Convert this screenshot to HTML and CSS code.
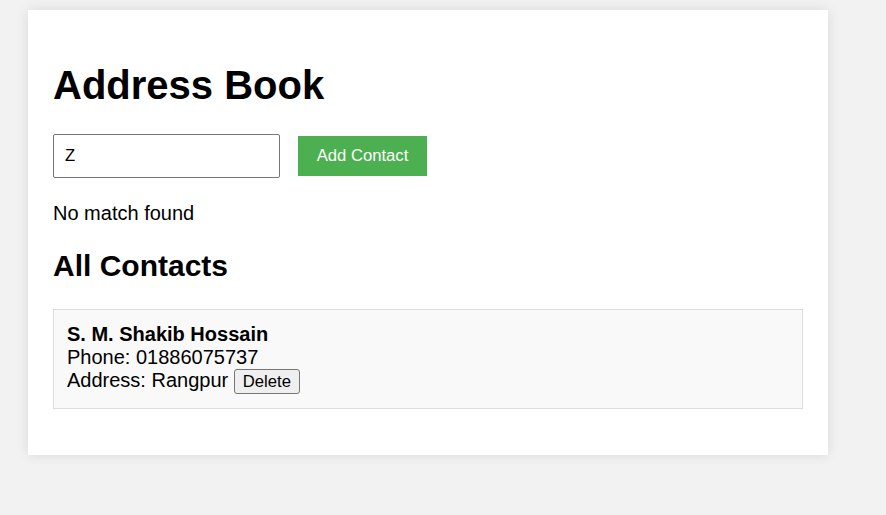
FILE: index.html
```html
<!DOCTYPE html>
<html lang="en">
<head>
<meta charset="utf-8">
<title>Address Book</title>
<link rel="stylesheet" href="styles.css">
</head>
<body>
  <div class="container">
    <h1 class="title">Address Book</h1>
    <div class="search-row">
      <input class="search-input" type="text" value="Z">
      <button class="add-btn" type="button">Add Contact</button>
    </div>
    <p class="status">No match found</p>
    <h2 class="subtitle">All Contacts</h2>
    <div class="contact-list">
      <div class="contact-card">
        <strong class="contact-name">S. M. Shakib Hossain</strong><br>
        Phone: 01886075737<br>
        Address: Rangpur <button class="delete-btn" type="button">Delete</button>
      </div>
    </div>
  </div>
</body>
</html>
```

FILE: styles.css
```css
* {
  box-sizing: border-box;
}

html, body {
  margin: 0;
  padding: 0;
}

body {
  background: #f2f2f2;
  font-family: "Liberation Sans", Arial, sans-serif;
  font-size: 20px;
  line-height: 23px;
  color: #000;
  padding: 10px 28px;
}

.container {
  width: 800px;
  background: #fff;
  padding: 25px;
  box-shadow: 0 0 12px rgba(0, 0, 0, 0.1);
}

.title {
  font-size: 40px;
  line-height: 46px;
  font-weight: bold;
  margin: 27px 0 26px;
}

.search-row {
  display: flex;
  align-items: center;
  gap: 18px;
  margin-bottom: 24px;
}

.search-input {
  width: 227px;
  height: 44px;
  border: 1px solid #767676;
  border-radius: 2px;
  padding: 0 11px;
  font-family: "Liberation Sans", Arial, sans-serif;
  font-size: 16.67px;
  color: #000;
  background: #fff;
  outline: none;
}

.add-btn {
  width: 129px;
  height: 40px;
  border: none;
  background: #4caf50;
  color: #fff;
  font-family: "Liberation Sans", Arial, sans-serif;
  font-size: 16.67px;
  padding: 0;
  cursor: pointer;
}

.status {
  margin: 0;
}

.subtitle {
  font-size: 30px;
  line-height: 34px;
  font-weight: bold;
  margin: 24px 0 26px;
}

.contact-list {
  margin-bottom: 21px;
}

.contact-card {
  border: 1px solid #ddd;
  background: #f9f9f9;
  padding: 12.5px 13px 14.5px;
}

.contact-name {
  font-weight: bold;
}

.delete-btn {
  font-family: "Liberation Sans", Arial, sans-serif;
  font-size: 16.67px;
  line-height: 19px;
  padding: 1px 8px;
  border: 1px solid #767676;
  border-radius: 3px;
  background: #efefef;
  color: #000;
  height: 25px;
  vertical-align: baseline;
}
```
